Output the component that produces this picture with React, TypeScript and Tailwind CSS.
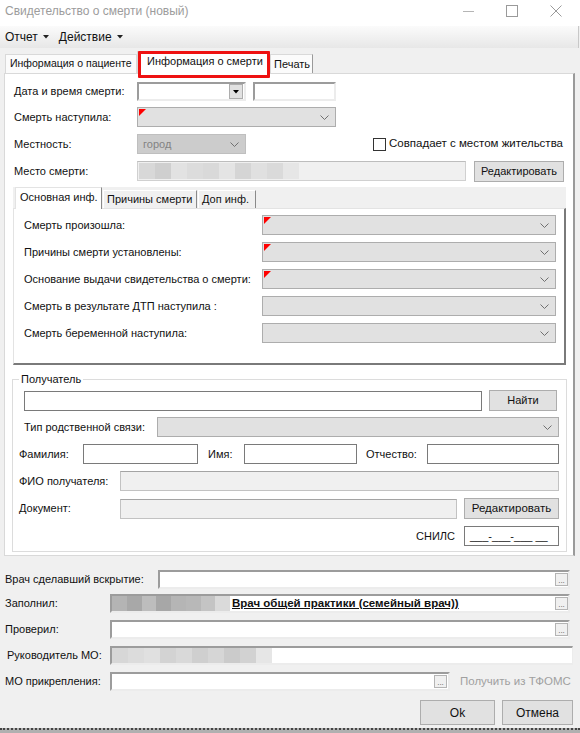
import React from "react";

const Chevron = () => (
  <svg width="9" height="5" viewBox="0 0 9 5" className="shrink-0">
    <path d="M0.5 0.5 L4.5 4.5 L8.5 0.5" fill="none" stroke="#707070" strokeWidth="1" />
  </svg>
);

const RedMark = () => (
  <svg width="7" height="7" viewBox="0 0 7 7" className="absolute left-[1px] top-[1px]">
    <polygon points="0,0 7,0 0,7" fill="#ff0000" />
  </svg>
);

const DownTri = ({ color = "#000" }: { color?: string }) => (
  <svg width="6" height="4" viewBox="0 0 6 4" className="shrink-0">
    <polygon points="0,0 6,0 3,3.5" fill={color} />
  </svg>
);

function Combo({
  className = "",
  required,
  text,
  disabled,
}: {
  className?: string;
  required?: boolean;
  text?: string;
  disabled?: boolean;
}) {
  return (
    <div
      className={`relative flex items-center justify-between h-[20px] border pl-[5px] pr-[6px] ${
        disabled ? "bg-[#cccccc] border-[#bfbfbf] text-[#838383]" : "bg-[#e1e1e1] border-[#adadad]"
      } ${className}`}
    >
      {required && <RedMark />}
      <span>{text}</span>
      <Chevron />
    </div>
  );
}

function Field3D({ className = "", children }: { className?: string; children?: React.ReactNode }) {
  return (
    <div
      className={`relative flex items-center h-[19px] bg-white border-2 border-t-[#9c9c9c] border-l-[#9c9c9c] border-b-[#ececec] border-r-[#ececec] overflow-hidden ${className}`}
    >
      {children}
    </div>
  );
}

function Btn({ className = "", children }: { className?: string; children?: React.ReactNode }) {
  return (
    <div className={`flex items-center justify-center bg-[#e1e1e1] border border-[#adadad] ${className}`}>{children}</div>
  );
}

const Ellipsis = () => (
  <div className="w-[13px] h-[13px] shrink-0 bg-[#f0f0f0] border border-[#b4b4b4] flex items-end justify-center text-[8px] leading-[9px] text-[#555]">
    ...
  </div>
);

function Mosaic({ colors, className = "" }: { colors: string[]; className?: string }) {
  return (
    <div className={`flex h-full shrink-0 ${className}`}>
      {colors.map((c, i) => (
        <div key={i} className="w-[16px] h-full" style={{ backgroundColor: c }} />
      ))}
    </div>
  );
}

const Input = ({ className = "" }: { className?: string }) => (
  <div className={`h-[20px] bg-white border border-[#7a7a7a] ${className}`} />
);

const Disabled = ({ className = "" }: { className?: string }) => (
  <div className={`h-[20px] bg-[#f0f0f0] border border-[#c2c2c2] border-t-[#a4a4a4] ${className}`} />
);

export default function App() {
  return (
    <div className="relative w-[580px] h-[733px] bg-[#f0f0f0] font-['Liberation_Sans',Arial,sans-serif] text-[11px] text-[#111] flex flex-col overflow-hidden">
      {/* Title bar */}
      <div className="h-[26px] bg-white flex items-center pb-[4px] shrink-0">
        <span className="pl-[5px] text-[12px] text-[#9c9c9c]">Свидетельство о смерти (новый)</span>
        <div className="ml-auto flex h-full mr-[2px]">
          <div className="w-[44px] flex items-center justify-center">
            <svg width="11" height="11" viewBox="0 0 11 11">
              <line x1="0" y1="5.5" x2="11" y2="5.5" stroke="#b5b5b5" />
            </svg>
          </div>
          <div className="w-[44px] flex items-center justify-center">
            <svg width="12" height="12" viewBox="0 0 12 12">
              <rect x="0.5" y="0.5" width="11" height="11" fill="none" stroke="#9a9a9a" />
            </svg>
          </div>
          <div className="w-[44px] flex items-center justify-center">
            <svg width="12" height="12" viewBox="0 0 12 12">
              <path d="M0.5 0.5 L11.5 11.5 M11.5 0.5 L0.5 11.5" stroke="#9a9a9a" />
            </svg>
          </div>
        </div>
      </div>

      {/* Menu bar */}
      <div className="h-[22px] w-[579px] shrink-0 bg-gradient-to-b from-[#fbfbfb] to-[#e7e7e7] border-r border-[#c8c8c8] flex items-center pl-[5px] text-[12px]">
        <span>Отчет</span>
        <span className="ml-[5px] mr-[10px] flex items-center">
          <DownTri color="#222" />
        </span>
        <span>Действие</span>
        <span className="ml-[5px] flex items-center">
          <DownTri color="#222" />
        </span>
      </div>

      {/* Top tabs */}
      <div className="mt-[3px] h-[22px] flex items-end pl-[5px] shrink-0">
        <div className="w-[132px] h-[19px] bg-[#fbfbfb] border border-b-0 border-[#d9d9d9] flex items-center pl-[4px] text-[10.5px] whitespace-nowrap overflow-hidden">
          Информация о пациенте
        </div>
        <div className="relative z-10 w-[133px] h-[23px] -mb-[1px] bg-white border border-b-0 border-[#d9d9d9] flex items-center pl-[9px] pb-[3px] whitespace-nowrap overflow-hidden">
          Информация о смерти
        </div>
        <div className="w-[43px] h-[19px] bg-[#fbfbfb] border border-b-0 border-[#d9d9d9] border-r-[#9a9a9a] flex items-center pl-[3px] whitespace-nowrap overflow-hidden">
          Печать
        </div>
      </div>

      {/* Tab page */}
      <div className="ml-[4px] w-[571px] bg-white border border-[#d9d9d9] border-r-2 border-r-[#9a9a9a] shrink-0 pb-[3px]">
        {/* Row 1 */}
        <div className="mt-[8px] h-[19px] flex items-center pl-[9px]">
          <div className="w-[123px]">Дата и время смерти:</div>
          <Field3D className="w-[109px] justify-end pr-[1px]">
            <div className="w-[14px] h-[15px] bg-[#e1e1e1] border border-[#adadad] flex items-center justify-center">
              <DownTri />
            </div>
          </Field3D>
          <Field3D className="w-[83px] ml-[7px]" />
        </div>
        {/* Row 2 */}
        <div className="mt-[6px] h-[20px] flex items-center pl-[9px]">
          <div className="w-[123px]">Смерть наступила:</div>
          <Combo className="w-[199px]" required />
        </div>
        {/* Row 3 */}
        <div className="mt-[7px] h-[20px] flex items-center pl-[9px]">
          <div className="w-[123px]">Местность:</div>
          <Combo className="w-[109px]" disabled text="город" />
          <div className="ml-[127px] w-[13px] h-[13px] bg-white border border-[#333]" />
          <span className="ml-[3px] text-[11.5px]">Совпадает с местом жительства</span>
        </div>
        {/* Row 4 */}
        <div className="mt-[7px] h-[20px] flex items-center pl-[9px]">
          <div className="w-[123px]">Место смерти:</div>
          <div className="w-[329px] h-[20px] bg-[#f0f0f0] border border-[#d0d0d0] border-t-[#bdbdbd] p-[1px] flex">
            <Mosaic
              colors={[
                "#d8d8d8",
                "#cfcfcf",
                "#e2e2e2",
                "#dcdcdc",
                "#d9d9d9",
                "#e4e4e4",
                "#d5d5d5",
                "#e0e0e0",
                "#dadada",
                "#e6e6e6",
              ]}
            />
          </div>
          <Btn className="ml-[8px] w-[90px] h-[21px]">Редактировать</Btn>
        </div>

        {/* Inner tabs */}
        <div className="mt-[6px] ml-[8px] w-[553px]">
          <div className="h-[21px] bg-[#f0f0f0] flex items-end pl-[2px]">
            <div className="relative z-10 w-[87px] h-[22px] -mb-[1px] bg-white border border-b-0 border-[#e3e3e3] border-r-[#8a8a8a] flex items-center pl-[4px] pb-[2px] whitespace-nowrap">
              Основная инф.
            </div>
            <div className="ml-[1px] w-[94px] h-[18px] bg-[#f0f0f0] border border-b-0 border-white border-r-[#8a8a8a] flex items-center pl-[3px] whitespace-nowrap">
              Причины смерти
            </div>
            <div className="ml-[1px] w-[58px] h-[18px] bg-[#f0f0f0] border border-b-0 border-white border-r-[#8a8a8a] flex items-center pl-[3px] whitespace-nowrap">
              Доп инф.
            </div>
          </div>
          <div className="h-[157px] bg-white border border-[#e3e3e3] border-r-2 border-b-2 border-r-[#7a7a7a] border-b-[#7a7a7a] pt-[6px] pl-[10px] flex flex-col gap-[7px]">
            <div className="h-[20px] flex items-center">
              <div className="w-[238px]">Смерть произошла:</div>
              <Combo className="w-[294px]" required />
            </div>
            <div className="h-[20px] flex items-center">
              <div className="w-[238px]">Причины смерти установлены:</div>
              <Combo className="w-[294px]" required />
            </div>
            <div className="h-[20px] flex items-center">
              <div className="w-[238px] whitespace-nowrap">Основание выдачи свидетельства о смерти:</div>
              <Combo className="w-[294px]" required />
            </div>
            <div className="h-[20px] flex items-center">
              <div className="w-[238px]">Смерть в результате ДТП наступила :</div>
              <Combo className="w-[294px]" />
            </div>
            <div className="h-[20px] flex items-center">
              <div className="w-[238px]">Смерть беременной наступила:</div>
              <Combo className="w-[294px]" />
            </div>
          </div>
        </div>

        {/* Recipient group */}
        <fieldset className="mt-[7px] ml-[7px] w-[555px] border border-[#dcdcdc] pb-[5px]">
          <legend className="ml-[6px] px-[2px] leading-[14px]">Получатель</legend>
          <div className="mt-[4px] h-[21px] flex items-center pl-[11px]">
            <Input className="w-[458px]" />
            <Btn className="ml-[7px] w-[68px] h-[21px]">Найти</Btn>
          </div>
          <div className="mt-[6px] h-[20px] flex items-center pl-[11px]">
            <div className="w-[133px]">Тип родственной связи:</div>
            <Combo className="w-[402px]" />
          </div>
          <div className="mt-[7px] h-[20px] flex items-center pl-[6px]">
            <div className="w-[64px]">Фамилия:</div>
            <Input className="w-[115px]" />
            <div className="ml-[10px] w-[36px]">Имя:</div>
            <Input className="w-[113px]" />
            <div className="ml-[9px] w-[61px]">Отчество:</div>
            <Input className="w-[132px]" />
          </div>
          <div className="mt-[7px] h-[20px] flex items-center pl-[6px]">
            <div className="w-[101px]">ФИО получателя:</div>
            <Disabled className="w-[439px]" />
          </div>
          <div className="mt-[7px] h-[21px] flex items-center pl-[6px]">
            <div className="w-[101px]">Документ:</div>
            <Disabled className="w-[337px]" />
            <Btn className="ml-[7px] w-[95px] h-[21px] text-[11.5px]">Редактировать</Btn>
          </div>
          <div className="mt-[7px] h-[20px] flex items-center justify-end pr-[7px]">
            <span className="mr-[9px]">СНИЛС</span>
            <div className="w-[95px] h-[20px] bg-white border border-[#7a7a7a] flex items-center pl-[5px]">
              ___-___-___ __
            </div>
          </div>
        </fieldset>
      </div>

      {/* Bottom section */}
      <div className="pl-[5px] shrink-0">
        <div className="mt-[14px] h-[19px] flex items-center">
          <div className="w-[153px]">Врач сделавший вскрытие:</div>
          <Field3D className="w-[412px] justify-end">
            <Ellipsis />
          </Field3D>
        </div>
        <div className="mt-[5px] h-[19px] flex items-center">
          <div className="w-[105px]">Заполнил:</div>
          <Field3D className="w-[460px]">
            <Mosaic
              colors={["#b4b4b4", "#a8a8a8", "#bdbdbd", "#a7a7a7", "#b5b5b5", "#b8b8b8", "#c4c4c4", "#dadada"]}
              className="w-[118px] overflow-hidden"
            />
            <span className="font-bold underline whitespace-nowrap ml-[2px] flex-1 text-[11.5px]">
              Врач общей практики (семейный врач))
            </span>
            <Ellipsis />
          </Field3D>
        </div>
        <div className="mt-[7px] h-[19px] flex items-center">
          <div className="w-[105px]">Проверил:</div>
          <Field3D className="w-[460px] justify-end">
            <Ellipsis />
          </Field3D>
        </div>
        <div className="mt-[7px] h-[19px] flex items-center">
          <div className="w-[105px] pl-[2px]">Руководитель МО:</div>
          <Field3D className="w-[463px] border-r-[#9c9c9c] border-r">
            <Mosaic
              colors={[
                "#d7d7d7",
                "#dcdcdc",
                "#e0e0e0",
                "#d3d3d3",
                "#d9d9d9",
                "#cfcfcf",
                "#d6d6d6",
                "#cbcbcb",
                "#d2d2d2",
                "#e6e6e6",
              ]}
            />
          </Field3D>
        </div>
        <div className="mt-[7px] h-[19px] flex items-center">
          <div className="w-[105px]">МО прикрепления:</div>
          <Field3D className="w-[340px] justify-end pr-[1px]">
            <Ellipsis />
          </Field3D>
          <span className="ml-[10px] text-[#a0a0a0] text-[11.5px]">Получить из ТФОМС</span>
        </div>
        <div className="mt-[9px] h-[25px] flex justify-end pr-[7px] text-[12px]">
          <Btn className="w-[75px] h-[25px]">Ok</Btn>
          <Btn className="ml-[7px] w-[71px] h-[25px]">Отмена</Btn>
        </div>
      </div>

      <div className="mt-auto h-[5px] border-t-2 border-dotted border-[#444] bg-[#b0b0b0] shrink-0" />

      {/* Red highlight annotation */}
      <div className="absolute z-20 left-[138px] top-[51px] w-[132px] h-[27px] border-[3px] border-[#ee1111] rounded-[1px] pointer-events-none" />
    </div>
  );
}
